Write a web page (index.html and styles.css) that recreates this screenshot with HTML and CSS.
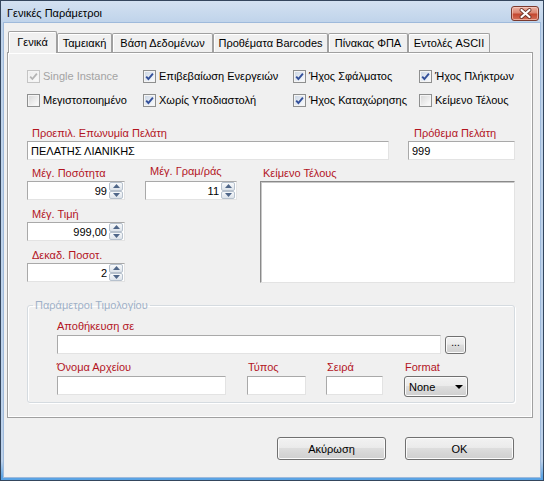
FILE: index.html
```html
<!DOCTYPE html>
<html lang="el">
<head>
<meta charset="utf-8">
<title>Γενικές Παράμετροι</title>
<link rel="stylesheet" href="styles.css">
</head>
<body>
<div class="window">
  <div class="titlebar">
    <span class="title">Γενικές Παράμετροι</span>
    <button class="close" aria-label="Κλείσιμο">
      <svg width="13" height="11" viewBox="0 0 13 11"><path d="M2.5 2 L10.5 9 M10.5 2 L2.5 9" stroke="#6b3328" stroke-width="3.8" stroke-linecap="round"/><path d="M2.5 2 L10.5 9 M10.5 2 L2.5 9" stroke="#ffffff" stroke-width="2.2" stroke-linecap="round"/></svg>
    </button>
  </div>
  <div class="client">
    <div class="tabs">
      <div class="tab active w-gen">Γενικά</div>
      <div class="tab w-tam">Ταμειακή</div>
      <div class="tab w-db">Βάση Δεδομένων</div>
      <div class="tab w-bar">Προθέματα Barcodes</div>
      <div class="tab w-fpa">Πίνακας ΦΠΑ</div>
      <div class="tab w-ascii">Εντολές ASCII</div>
    </div>
    <div class="panel">
      <div class="checks">
        <label class="chk disabled"><span class="box"><svg width="11" height="11" viewBox="0 0 11 11"><path d="M2.2 5.6 L4.4 8 L8.9 2.6" fill="none" stroke="#b4b4b4" stroke-width="1.8"/></svg></span>Single Instance</label>
        <label class="chk"><span class="box on"><svg width="11" height="11" viewBox="0 0 11 11"><path d="M2.2 5.6 L4.4 8 L8.9 2.6" fill="none" stroke="#33509a" stroke-width="1.9"/></svg></span>Επιβεβαίωση Ενεργειών</label>
        <label class="chk"><span class="box on"><svg width="11" height="11" viewBox="0 0 11 11"><path d="M2.2 5.6 L4.4 8 L8.9 2.6" fill="none" stroke="#33509a" stroke-width="1.9"/></svg></span>Ήχος Σφάλματος</label>
        <label class="chk"><span class="box on"><svg width="11" height="11" viewBox="0 0 11 11"><path d="M2.2 5.6 L4.4 8 L8.9 2.6" fill="none" stroke="#33509a" stroke-width="1.9"/></svg></span>Ήχος Πλήκτρων</label>
        <label class="chk"><span class="box"></span>Μεγιστοποιημένο</label>
        <label class="chk"><span class="box on"><svg width="11" height="11" viewBox="0 0 11 11"><path d="M2.2 5.6 L4.4 8 L8.9 2.6" fill="none" stroke="#33509a" stroke-width="1.9"/></svg></span>Χωρίς Υποδιαστολή</label>
        <label class="chk"><span class="box on"><svg width="11" height="11" viewBox="0 0 11 11"><path d="M2.2 5.6 L4.4 8 L8.9 2.6" fill="none" stroke="#33509a" stroke-width="1.9"/></svg></span>Ήχος Καταχώρησης</label>
        <label class="chk"><span class="box"></span>Κείμενο Τέλους</label>
      </div>

      <div class="row name-row">
        <div class="field f-name">
          <label class="lbl">Προεπιλ. Επωνυμία Πελάτη</label>
          <input class="txt" type="text" value="ΠΕΛΑΤΗΣ ΛΙΑΝΙΚΗΣ">
        </div>
        <div class="field f-prefix">
          <label class="lbl lbl-6">Πρόθεμα Πελάτη</label>
          <input class="txt" type="text" value="999">
        </div>
      </div>

      <div class="row mid-row">
        <div class="col-spins">
          <div class="field">
            <label class="lbl">Μέγ. Ποσότητα</label>
            <div class="spin"><input class="spin-val" type="text" value="99"><span class="spin-btns"><span class="sb"><svg width="7" height="4" viewBox="0 0 7 4"><path d="M0 4 L3.5 0 L7 4 Z" fill="#4f6688"/></svg></span><span class="sb"><svg width="7" height="4" viewBox="0 0 7 4"><path d="M0 0 L7 0 L3.5 4 Z" fill="#4f6688"/></svg></span></span></div>
          </div>
          <div class="field">
            <label class="lbl">Μέγ. Τιμή</label>
            <div class="spin"><input class="spin-val" type="text" value="999,00"><span class="spin-btns"><span class="sb"><svg width="7" height="4" viewBox="0 0 7 4"><path d="M0 4 L3.5 0 L7 4 Z" fill="#4f6688"/></svg></span><span class="sb"><svg width="7" height="4" viewBox="0 0 7 4"><path d="M0 0 L7 0 L3.5 4 Z" fill="#4f6688"/></svg></span></span></div>
          </div>
          <div class="field">
            <label class="lbl">Δεκαδ. Ποσοτ.</label>
            <div class="spin"><input class="spin-val" type="text" value="2"><span class="spin-btns"><span class="sb"><svg width="7" height="4" viewBox="0 0 7 4"><path d="M0 4 L3.5 0 L7 4 Z" fill="#4f6688"/></svg></span><span class="sb"><svg width="7" height="4" viewBox="0 0 7 4"><path d="M0 0 L7 0 L3.5 4 Z" fill="#4f6688"/></svg></span></span></div>
          </div>
        </div>
        <div class="col-gram">
          <div class="field">
            <label class="lbl lbl-raised">Μέγ. Γραμ/ράς</label>
            <div class="spin"><input class="spin-val" type="text" value="11"><span class="spin-btns"><span class="sb"><svg width="7" height="4" viewBox="0 0 7 4"><path d="M0 4 L3.5 0 L7 4 Z" fill="#4f6688"/></svg></span><span class="sb"><svg width="7" height="4" viewBox="0 0 7 4"><path d="M0 0 L7 0 L3.5 4 Z" fill="#4f6688"/></svg></span></span></div>
          </div>
        </div>
        <div class="col-memo">
          <label class="lbl lbl-3">Κείμενο Τέλους</label>
          <textarea class="memo"></textarea>
        </div>
      </div>

      <fieldset class="group">
        <legend>Παράμετροι Τιμολογίου</legend>
        <div class="field">
          <label class="lbl lbl-0">Αποθήκευση σε</label>
          <div class="path-row">
            <input class="txt path" type="text" value="">
            <button class="browse">...</button>
          </div>
        </div>
        <div class="row file-row">
          <div class="field f-file">
            <label class="lbl lbl-0">Όνομα Αρχείου</label>
            <input class="txt" type="text" value="">
          </div>
          <div class="field f-type">
            <label class="lbl lbl-1">Τύπος</label>
            <input class="txt" type="text" value="">
          </div>
          <div class="field f-series">
            <label class="lbl lbl-1">Σειρά</label>
            <input class="txt" type="text" value="">
          </div>
          <div class="field f-format">
            <label class="lbl lbl-1">Format</label>
            <button class="combo"><span>None</span><svg width="8" height="4" viewBox="0 0 8 4"><path d="M0 0 L8 0 L4 4 Z" fill="#000"/></svg></button>
          </div>
        </div>
      </fieldset>
    </div>
    <div class="buttons">
      <button class="btn">Ακύρωση</button>
      <button class="btn">OK</button>
    </div>
  </div>
</div>
</body>
</html>
```

FILE: styles.css
```css
* { box-sizing: border-box; }

html, body {
  margin: 0;
  padding: 0;
  background: #ffffff;
}

body {
  font-family: "Liberation Sans", Arial, sans-serif;
  font-size: 11px;
  line-height: 14px;
  color: #000;
}

button, input, textarea {
  font: inherit;
  color: inherit;
  margin: 0;
}

/* ---------- window frame ---------- */
.window {
  width: 544px;
  height: 481px;
  border: 1px solid #34465d;
  background: linear-gradient(#d3e1f1, #bfd3ea 22px, #bcd1ea 460px, #5aa3e4 476px, #5aa3e4 479px);
  padding: 0 3px 3px;
  display: flex;
  flex-direction: column;
}

.titlebar {
  height: 22px;
  flex: none;
  display: flex;
  justify-content: space-between;
  align-items: flex-start;
}

.title {
  padding: 5px 0 0 3px;
  line-height: 14px;
}

.close {
  width: 28px;
  height: 15px;
  margin: 5px 1px 0 0;
  padding: 0;
  border: 1px solid #7b3a2e;
  border-radius: 3px;
  background: linear-gradient(#eab1a3 0%, #db8672 45%, #c4472f 55%, #d3705a 100%);
  box-shadow: inset 0 0 0 1px rgba(255, 220, 210, 0.55);
  display: flex;
  align-items: center;
  justify-content: center;
}

.client {
  flex: 1;
  background: #f0f0f0;
  padding: 8px 7px 0 3px;
  display: flex;
  flex-direction: column;
  box-shadow: 0 0 0 1px #9fbadb;
}

/* ---------- tabs ---------- */
.tabs {
  height: 21px;
  flex: none;
  display: flex;
  align-items: flex-end;
  padding-left: 1px;
}

.tab {
  height: 19px;
  line-height: 18px;
  text-align: center;
  white-space: nowrap;
  border: 1px solid #a0a0a0;
  border-bottom: 0;
  border-radius: 2px 2px 0 0;
  background: #f0f0f0;
  box-shadow: inset 1px 1px 0 #ffffff;
}

.tab.active {
  height: 22px;
  margin-bottom: -1px;
  line-height: 21px;
  position: relative;
  z-index: 1;
}

.w-gen { width: 49px; }
.w-tam { width: 55px; }
.w-db { width: 101px; }
.w-bar { width: 115px; }
.w-fpa { width: 80px; }
.w-ascii { width: 82px; }

/* ---------- panel ---------- */
.panel {
  height: 366px;
  flex: none;
  border: 1px solid #a0a0a0;
  box-shadow: inset 1px 1px 0 #ffffff, inset -1px -1px 0 #ffffff;
  padding: 15px 0 0 19px;
}

.checks {
  display: grid;
  grid-template-columns: 116px 150px 126px auto;
  grid-auto-rows: 16px;
  row-gap: 8px;
}

.chk {
  display: flex;
  align-items: center;
  gap: 3px;
  white-space: nowrap;
}

.chk.disabled { color: #a3a3a3; }

.box {
  width: 13px;
  height: 13px;
  flex: none;
  border: 1px solid #8e8f8f;
  background: linear-gradient(135deg, #d6d6d6, #f7f7f7 80%);
  box-shadow: inset 0 0 0 1px #f4f4f4;
  display: flex;
}

.box.on {
  background: linear-gradient(135deg, #c9d4e3, #f3f6fa 80%);
}

.disabled .box {
  border-color: #c4c4c4;
  background: linear-gradient(135deg, #ececec, #fafafa);
}

.row { display: flex; }

.field {
  display: flex;
  flex-direction: column;
}

.lbl {
  color: #b3151f;
  height: 14px;
  margin-bottom: 1px;
  padding-left: 5px;
  white-space: nowrap;
}

.lbl-6 { padding-left: 6px; }
.lbl-3 { padding-left: 3px; }
.lbl-1 { padding-left: 1px; }
.lbl-0 { padding-left: 0; }

.lbl-raised {
  margin-top: -2px;
  margin-bottom: 3px;
}

.txt {
  height: 19px;
  width: 100%;
  padding: 0 3px;
  border: 1px solid;
  border-color: #a9a9a9 #e3e3e3 #e3e3e3 #a9a9a9;
  background: #fff;
  outline: none;
}

.name-row {
  margin-top: 18px;
  gap: 19px;
}

.f-name { width: 362px; }
.f-prefix { width: 107px; }

/* ---------- spin boxes ---------- */
.mid-row { margin-top: 6px; }

.col-spins {
  width: 98px;
  display: flex;
  flex-direction: column;
  gap: 7px;
}

.col-gram {
  width: 92px;
  margin-left: 20px;
}

.col-memo {
  width: 255px;
  margin-left: 23px;
  display: flex;
  flex-direction: column;
}

.spin {
  height: 19px;
  display: flex;
  border: 1px solid;
  border-color: #a9a9a9 #e3e3e3 #e3e3e3 #a9a9a9;
  background: #fff;
}

.spin-val {
  flex: 1;
  min-width: 0;
  border: 0;
  padding: 0 2px 0 0;
  text-align: right;
  background: transparent;
  outline: none;
}

.spin-btns {
  width: 15px;
  flex: none;
  display: flex;
  flex-direction: column;
  padding: 0 1px 0 0;
}

.sb {
  flex: 1;
  border: 1px solid #b7c1cd;
  border-radius: 2px;
  background: linear-gradient(#f7f9fb, #dde3ea);
  display: flex;
  align-items: center;
  justify-content: center;
}

.memo {
  height: 102px;
  width: 100%;
  resize: none;
  border: 1px solid;
  border-color: #8a8a8a #e3e3e3 #e3e3e3 #8a8a8a;
  box-shadow: inset 1px 1px 0 #c8c8c8;
  background: #fff;
  outline: none;
}

/* ---------- group box ---------- */
.group {
  width: 488px;
  margin: 15px 0 0 0;
  min-width: 0;
  border: 1px solid #d5dbe0;
  border-radius: 3px;
  box-shadow: 1px 1px 0 #ffffff, inset 1px 1px 0 #ffffff;
  padding: 7px 0 5px 29px;
}

.group legend {
  margin-left: -24px;
  padding: 0 2px;
  color: #9fb1c8;
  line-height: 14px;
}

.group .lbl { margin-bottom: 2px; }

.path-row {
  display: flex;
  align-items: center;
  gap: 4px;
}

.path { width: 384px; }

.browse {
  width: 21px;
  height: 18px;
  padding: 0 0 3px;
  border: 1px solid #707070;
  border-radius: 3px;
  background: linear-gradient(#f2f2f2 0%, #ebebeb 45%, #dddddd 50%, #cfcfcf 100%);
  box-shadow: inset 0 0 0 1px #fbfbfb;
  line-height: 10px;
  font-size: 10px;
}

.file-row { margin-top: 6px; }

.f-file { width: 169px; }
.f-type { width: 59px; margin-left: 21px; }
.f-series { width: 57px; margin-left: 20px; }
.f-format { width: 64px; margin-left: 21px; }

.combo {
  height: 21px;
  width: 64px;
  padding: 0 4px 0 4px;
  border: 1px solid #707070;
  border-radius: 3px;
  background: linear-gradient(#f2f2f2 0%, #ebebeb 45%, #dddddd 50%, #cfcfcf 100%);
  box-shadow: inset 0 0 0 1px #fbfbfb;
  display: flex;
  align-items: center;
  justify-content: space-between;
}

/* ---------- dialog buttons ---------- */
.buttons {
  display: flex;
  justify-content: flex-end;
  gap: 19px;
  margin-top: 19px;
  padding-right: 19px;
}

.btn {
  width: 109px;
  height: 23px;
  padding: 0;
  border: 1px solid #707070;
  border-radius: 3px;
  background: linear-gradient(#f2f2f2 0%, #ebebeb 45%, #dddddd 50%, #cfcfcf 100%);
  box-shadow: inset 0 0 0 1px #fbfbfb;
}
```
